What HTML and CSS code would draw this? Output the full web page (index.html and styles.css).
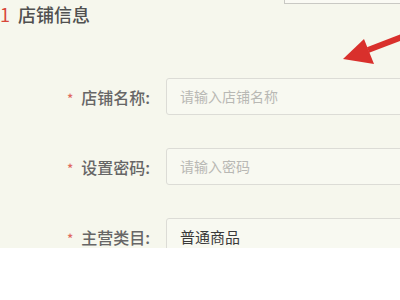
FILE: index.html
```html
<!DOCTYPE html>
<html lang="zh">
<head>
<meta charset="utf-8">
<link rel="stylesheet" href="styles.css">
</head>
<body>
<div class="screen">
  <div class="topbox"></div>
  <svg class="arrow" width="70" height="40" viewBox="0 0 70 40">
    <path d="M70 6 L28 22" stroke="#d9302c" stroke-width="6" fill="none"/>
    <polygon points="3,31 24,11 34,36" fill="#d9302c"/>
  </svg>
  <div class="title"><span class="num">1</span>店铺信息</div>
  <div class="form">
    <div class="row">
      <label class="label"><span class="star">*</span>店铺名称:</label>
      <div class="input placeholder">请输入店铺名称</div>
    </div>
    <div class="row">
      <label class="label"><span class="star">*</span>设置密码:</label>
      <div class="input placeholder">请输入密码</div>
    </div>
    <div class="row">
      <label class="label"><span class="star">*</span>主营类目:</label>
      <div class="input value">普通商品</div>
    </div>
  </div>
</div>
<div class="blank"></div>
</body>
</html>
```
FILE: styles.css
```css
html, body {
  margin: 0;
  padding: 0;
  background: #ffffff;
  width: 400px;
  height: 300px;
  overflow: hidden;
  font-family: "Noto Sans CJK SC", "Noto Sans", sans-serif;
}
.screen {
  position: relative;
  height: 248px;
  overflow: hidden;
  background: #f6f7ed;
}
.topbox {
  position: absolute;
  left: 284px;
  top: -10px;
  width: 130px;
  height: 12px;
  border: 1px solid #c9c9c4;
  background: #fafaf4;
}
.arrow {
  position: absolute;
  left: 340px;
  top: 28px;
}
.title {
  padding: 1px 0 0 0;
  height: 28px;
  font-size: 18px;
  line-height: 26px;
  color: #505050;
  font-weight: 500;
}
.num {
  color: #d8473a;
  font-weight: 400;
  margin-right: 8px;
}
.form {
  margin-top: 49px;
  display: flex;
  flex-direction: column;
  gap: 33px;
}
.row {
  display: flex;
  align-items: center;
  height: 37px;
}
.label {
  width: 150px;
  text-align: right;
  font-size: 16px;
  color: #666;
  font-weight: 500;
  margin-right: 16px;
}
.star {
  color: #e06a5e;
  font-size: 13px;
  margin-right: 8px;
}
.input {
  flex: 1;
  height: 35px;
  margin-right: -20px;
  border: 1px solid #dcdcd6;
  border-radius: 3px;
  background: #f8f9f1;
  padding-left: 13px;
  font-size: 14px;
  line-height: 35px;
}
.placeholder { color: #b8b8b4; }
.value { color: #3a3a3a; font-size: 15px; }
.blank {
  height: 52px;
  background: #ffffff;
}
```
